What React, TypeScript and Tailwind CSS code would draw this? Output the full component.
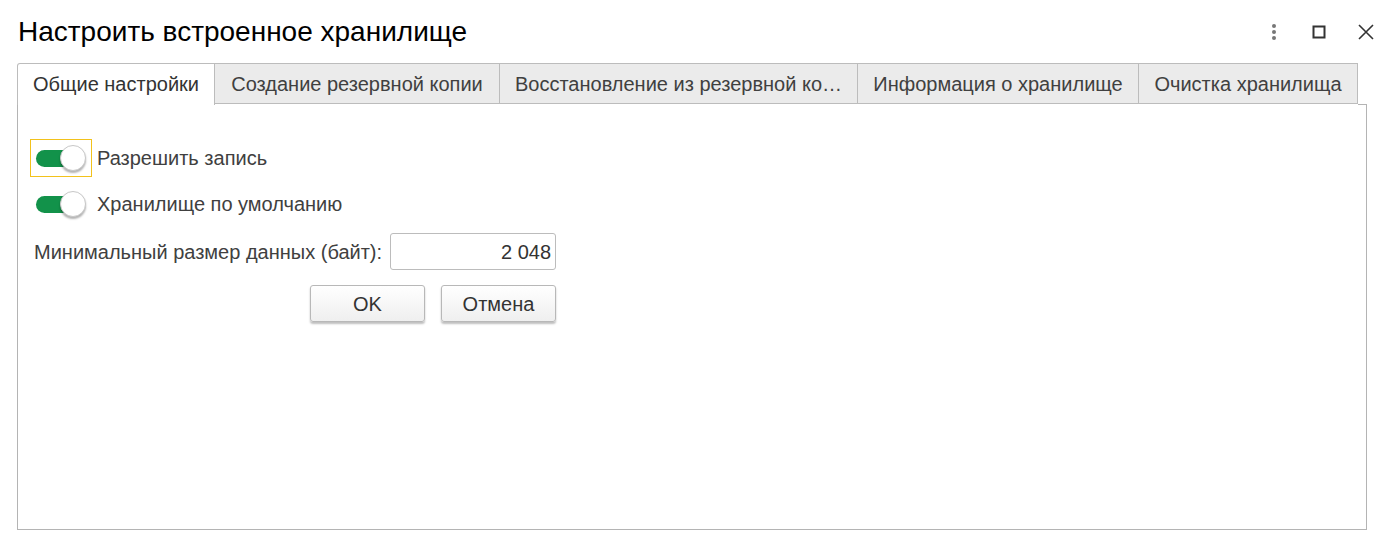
import React from "react";

const tabs = [
  { label: "Общие настройки", w: 198, active: true },
  { label: "Создание резервной копии", w: 285 },
  { label: "Восстановление из резервной ко…", w: 358 },
  { label: "Информация о хранилище", w: 281 },
  { label: "Очистка хранилища", w: 219 },
];

function Toggle({ focused }: { focused?: boolean }) {
  return (
    <div
      className={`w-[62px] h-[38px] flex items-center pl-[5px] border ${
        focused ? "border-[#f2c21c]" : "border-transparent"
      }`}
    >
      <div className="relative w-[50px] h-[26px]">
        <div className="absolute left-0 top-[5px] w-[40px] h-[17px] rounded-full bg-[#12924a]" />
        <div className="absolute left-[24px] top-0 w-[26px] h-[26px] rounded-full bg-white border border-[#c8c8c8] shadow-[0_2px_2px_rgba(0,0,0,0.3)]" />
      </div>
    </div>
  );
}

export default function App() {
  return (
    <div
      className="w-[1393px] h-[541px] bg-white text-[#404040] overflow-hidden"
      style={{ fontFamily: '"Liberation Sans", Arial, sans-serif' }}
    >
      <div className="flex items-center h-[62px] pl-[18px] pr-[18px]">
        <div className="text-[28px] text-black flex-1 leading-none pt-[2px]">
          Настроить встроенное хранилище
        </div>
        <div className="flex items-center gap-[31px] pt-[2px]">
          <svg width="14" height="20" viewBox="0 0 14 20">
            <circle cx="7" cy="4" r="2" fill="#777" />
            <circle cx="7" cy="10" r="2" fill="#777" />
            <circle cx="7" cy="16" r="2" fill="#777" />
          </svg>
          <svg width="14" height="14" viewBox="0 0 14 14">
            <rect x="1.5" y="1.5" width="11" height="11" fill="none" stroke="#333" strokeWidth="2" />
          </svg>
          <svg width="18" height="18" viewBox="0 0 18 18">
            <path d="M2 2 L16 16 M16 2 L2 16" stroke="#333" strokeWidth="1.6" />
          </svg>
        </div>
      </div>
      <div className="ml-[17px] w-[1350px]">
        <div className="flex h-[42px] items-end">
          {tabs.map((t) =>
            t.active ? (
              <div
                key={t.label}
                style={{ width: t.w }}
                className="h-[42px] bg-white border border-b-0 border-[#bcbcbc] rounded-tl-[3px] flex items-center justify-center text-[20px] text-[#333] relative z-10 mb-[-1px] pb-[1px] whitespace-nowrap"
              >
                {t.label}
              </div>
            ) : (
              <div
                key={t.label}
                style={{ width: t.w }}
                className="h-[41px] bg-[#ebebeb] border border-l-0 border-[#bcbcbc] flex items-center justify-center text-[20px] text-[#404040] whitespace-nowrap"
              >
                {t.label}
              </div>
            )
          )}
        </div>
        <div className="h-[426px] border border-t-0 border-[#b4b4b4] relative">
          <div className="absolute left-[1340px] right-[-1px] top-0 border-t border-[#b4b4b4]" />
          <div className="pl-[12px] pt-[35px] flex flex-col">
            <div className="flex items-center gap-[5px]">
              <Toggle focused />
              <span className="text-[20px] text-[#404040]">Разрешить запись</span>
            </div>
            <div className="flex items-center gap-[5px] mt-[8px]">
              <Toggle />
              <span className="text-[20px] text-[#404040]">Хранилище по умолчанию</span>
            </div>
            <div className="flex items-center mt-[10px] pl-[4px]">
              <span className="text-[20px] text-[#404040]">Минимальный размер данных (байт):</span>
              <div className="ml-[8px] w-[166px] h-[37px] border border-[#bcbcbc] rounded-[3px] flex items-center justify-end pr-[4px] text-[20px] text-[#333]">
                2 048
              </div>
            </div>
            <div className="flex gap-[16px] mt-[15px] ml-[280px]">
              <button className="w-[115px] h-[37px] rounded-[3px] border border-[#b8b8b8] bg-gradient-to-b from-white to-[#efefef] shadow-[0_2px_2px_rgba(0,0,0,0.25)] text-[20px] text-[#333]">
                OK
              </button>
              <button className="w-[115px] h-[37px] rounded-[3px] border border-[#b8b8b8] bg-gradient-to-b from-white to-[#efefef] shadow-[0_2px_2px_rgba(0,0,0,0.25)] text-[20px] text-[#333]">
                Отмена
              </button>
            </div>
          </div>
        </div>
      </div>
    </div>
  );
}
